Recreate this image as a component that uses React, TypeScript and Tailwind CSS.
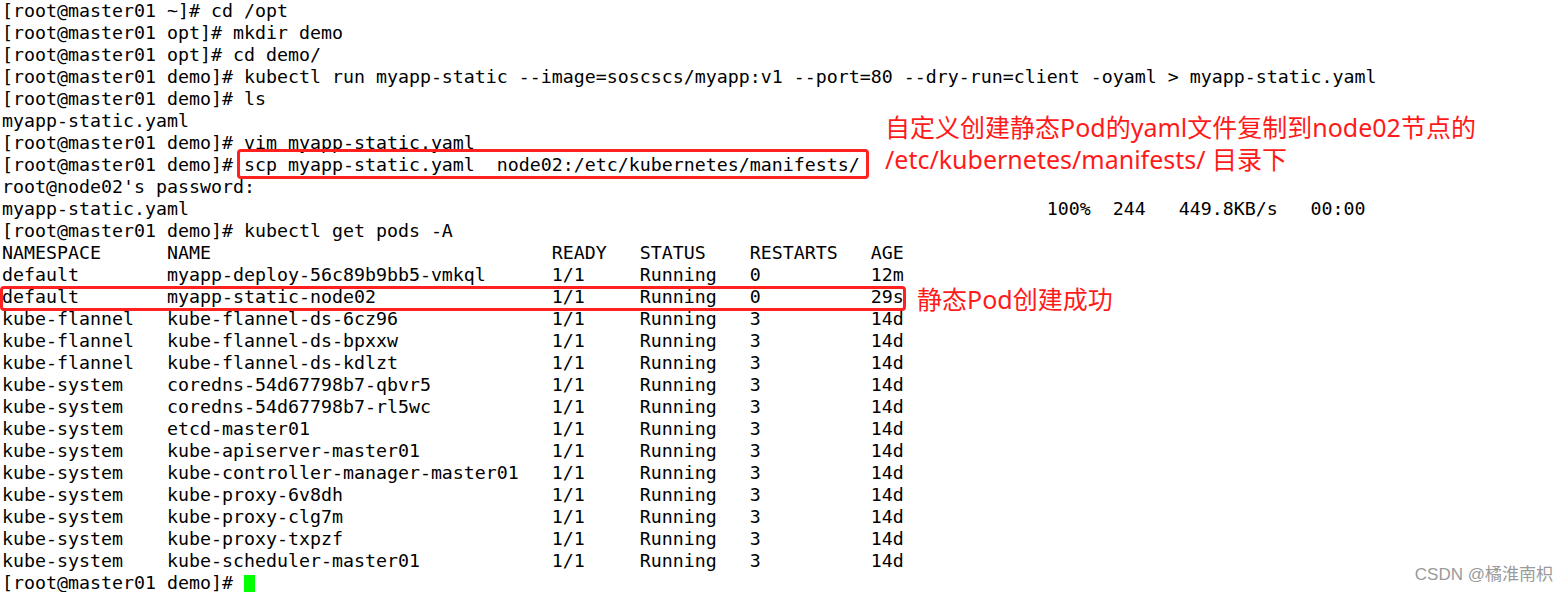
import React from "react";

function at(parts: [string, number][]) {
  let s = "";
  for (const [text, col] of parts) {
    if (s.length < col) s += " ".repeat(col - s.length);
    else if (s.length > 0) s += " ";
    s += text;
  }
  return s;
}

const lines: string[] = [
  "[root@master01 ~]# cd /opt",
  "[root@master01 opt]# mkdir demo",
  "[root@master01 opt]# cd demo/",
  "[root@master01 demo]# kubectl run myapp-static --image=soscscs/myapp:v1 --port=80 --dry-run=client -oyaml > myapp-static.yaml",
  "[root@master01 demo]# ls",
  "myapp-static.yaml",
  "[root@master01 demo]# vim myapp-static.yaml",
  "[root@master01 demo]# scp myapp-static.yaml  node02:/etc/kubernetes/manifests/",
  "root@node02's password:",
  at([
    ["myapp-static.yaml", 0],
    ["100%", 95],
    ["244", 101],
    ["449.8KB/s", 107],
    ["00:00", 119],
  ]),
  "[root@master01 demo]# kubectl get pods -A",
];

const rows: string[][] = [
  ["NAMESPACE", "NAME", "READY", "STATUS", "RESTARTS", "AGE"],
  ["default", "myapp-deploy-56c89b9bb5-vmkql", "1/1", "Running", "0", "12m"],
  ["default", "myapp-static-node02", "1/1", "Running", "0", "29s"],
  ["kube-flannel", "kube-flannel-ds-6cz96", "1/1", "Running", "3", "14d"],
  ["kube-flannel", "kube-flannel-ds-bpxxw", "1/1", "Running", "3", "14d"],
  ["kube-flannel", "kube-flannel-ds-kdlzt", "1/1", "Running", "3", "14d"],
  ["kube-system", "coredns-54d67798b7-qbvr5", "1/1", "Running", "3", "14d"],
  ["kube-system", "coredns-54d67798b7-rl5wc", "1/1", "Running", "3", "14d"],
  ["kube-system", "etcd-master01", "1/1", "Running", "3", "14d"],
  ["kube-system", "kube-apiserver-master01", "1/1", "Running", "3", "14d"],
  ["kube-system", "kube-controller-manager-master01", "1/1", "Running", "3", "14d"],
  ["kube-system", "kube-proxy-6v8dh", "1/1", "Running", "3", "14d"],
  ["kube-system", "kube-proxy-clg7m", "1/1", "Running", "3", "14d"],
  ["kube-system", "kube-proxy-txpzf", "1/1", "Running", "3", "14d"],
  ["kube-system", "kube-scheduler-master01", "1/1", "Running", "3", "14d"],
];

const colStarts = [0, 15, 50, 58, 68, 79];

export default function App() {
  const tableLines = rows.map((r) => at(r.map((c, i) => [c, colStarts[i]] as [string, number])));
  const annoFont = { fontFamily: '"Noto Sans", "Noto Sans CJK SC", sans-serif' };
  return (
    <div className="relative w-[1568px] h-[592px] bg-white overflow-hidden">
      <div
        className="flex flex-col pl-[2px] text-black text-[18.27px] leading-[22px] whitespace-pre"
        style={{ fontFamily: '"DejaVu Sans Mono", monospace' }}
      >
        {lines.map((l, i) => (
          <div key={i} className="h-[22px]">{l}</div>
        ))}
        {tableLines.map((l, i) => (
          <div key={"t" + i} className="h-[22px]">{l}</div>
        ))}
        <div className="h-[22px] flex items-end">
          <span className="self-start">{"[root@master01 demo]# "}</span>
          <span className="w-[11px] h-[19px] bg-[#00ff00]"></span>
        </div>
      </div>

      {/* red highlight boxes (overlays) */}
      <div className="absolute left-[237px] top-[149px] w-[632px] h-[30px] border-[3px] border-[#ff2020] rounded-[4px]"></div>
      <div className="absolute left-0 top-[286px] w-[906px] h-[25px] border-[3px] border-[#ff2020] rounded-[4px]"></div>

      {/* annotations (overlays) */}
      <div
        className="absolute left-[885px] top-[111px] flex flex-col text-[#ff1a1a] text-[25px] leading-[32px]"
        style={annoFont}
      >
        <div>自定义创建静态Pod的yaml文件复制到node02节点的</div>
        <div>/etc/kubernetes/manifests/ 目录下</div>
      </div>
      <div
        className="absolute left-[917px] top-[283px] text-[#ff1a1a] text-[25px] leading-[32px]"
        style={annoFont}
      >
        静态Pod创建成功
      </div>

      {/* watermark */}
      <div
        className="absolute right-[15px] bottom-[8px] text-[#9a9a9a] text-[17px] leading-[18px]"
        style={{ fontFamily: '"Liberation Sans", "Noto Sans CJK SC", sans-serif' }}
      >
        CSDN @橘淮南枳
      </div>
    </div>
  );
}
